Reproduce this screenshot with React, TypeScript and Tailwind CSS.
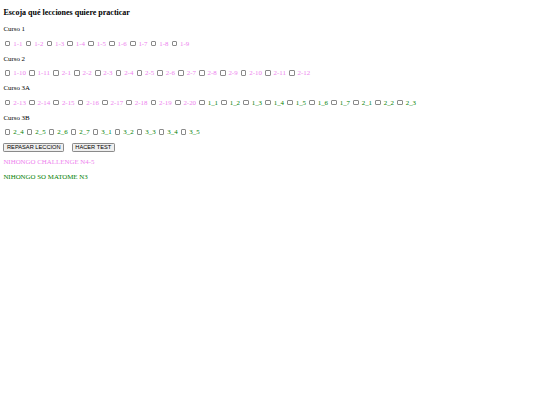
import React from 'react'

const PINK = 'text-[#ee82ee]'
const GREEN = 'text-[#008000]'

type Item = { label: string; color: 'pink' | 'green' }

const pink = (labels: string[]): Item[] => labels.map(label => ({ label, color: 'pink' }))
const green = (labels: string[]): Item[] => labels.map(label => ({ label, color: 'green' }))

const cursos: { title: string; items: Item[] }[] = [
  { title: 'Curso 1', items: pink(['1-1', '1-2', '1-3', '1-4', '1-5', '1-6', '1-7', '1-8', '1-9']) },
  {
    title: 'Curso 2',
    items: pink(['1-10', '1-11', '2-1', '2-2', '2-3', '2-4', '2-5', '2-6', '2-7', '2-8', '2-9', '2-10', '2-11', '2-12']),
  },
  {
    title: 'Curso 3A',
    items: [
      ...pink(['2-13', '2-14', '2-15', '2-16', '2-17', '2-18', '2-19', '2-20']),
      ...green(['1_1', '1_2', '1_3', '1_4', '1_5', '1_6', '1_7', '2_1', '2_2', '2_3']),
    ],
  },
  { title: 'Curso 3B', items: green(['2_4', '2_5', '2_6', '2_7', '3_1', '3_2', '3_3', '3_4', '3_5']) },
]

function Box() {
  return (
    <span className="inline-block align-[-0.5px] w-[5.6px] h-[5.6px] ml-[1.5px] mr-[1.1px] border-[0.6px] border-[#8a8a8a] rounded-[1px] bg-white" />
  )
}

function Button({ children }: { children: React.ReactNode }) {
  return (
    <button className="inline-block h-[8.6px] px-[2.6px] leading-[7px] text-[5.7px] text-black bg-[#efefef] border-[0.6px] border-[#8a8a8a] rounded-[1.2px] font-['Liberation_Sans',Arial,sans-serif]">
      {children}
    </button>
  )
}

export default function App() {
  return (
    <div className="min-h-[405px] w-[540px] bg-white px-[3.4px] pt-[8px] text-black font-['Liberation_Serif','Times_New_Roman',serif] text-[6.9px] leading-[7.9px]">
      <h3 className="font-bold text-[8px] leading-[9.2px] mb-[7.8px]">Escoja qué lecciones quiere practicar</h3>

      {cursos.map(curso => (
        <div key={curso.title}>
          <p className="mb-[6.85px]">{curso.title}</p>
          <p className="mb-[6.85px] whitespace-nowrap">
            {curso.items.map(item => (
              <React.Fragment key={item.label}>
                <Box />
                <span className={item.color === 'pink' ? PINK : GREEN}> {item.label} </span>
              </React.Fragment>
            ))}
          </p>
        </div>
      ))}

      <div className="mb-[6.9px] flex gap-[7.5px] items-center">
        <Button>REPASAR LECCION</Button>
        <Button>HACER TEST</Button>
      </div>

      <p className={`mb-[6.9px] ${PINK}`}>NIHONGO CHALLENGE N4-5</p>
      <p className={`mb-[6.9px] ${GREEN}`}>NIHONGO SO MATOME N3</p>
    </div>
  )
}
